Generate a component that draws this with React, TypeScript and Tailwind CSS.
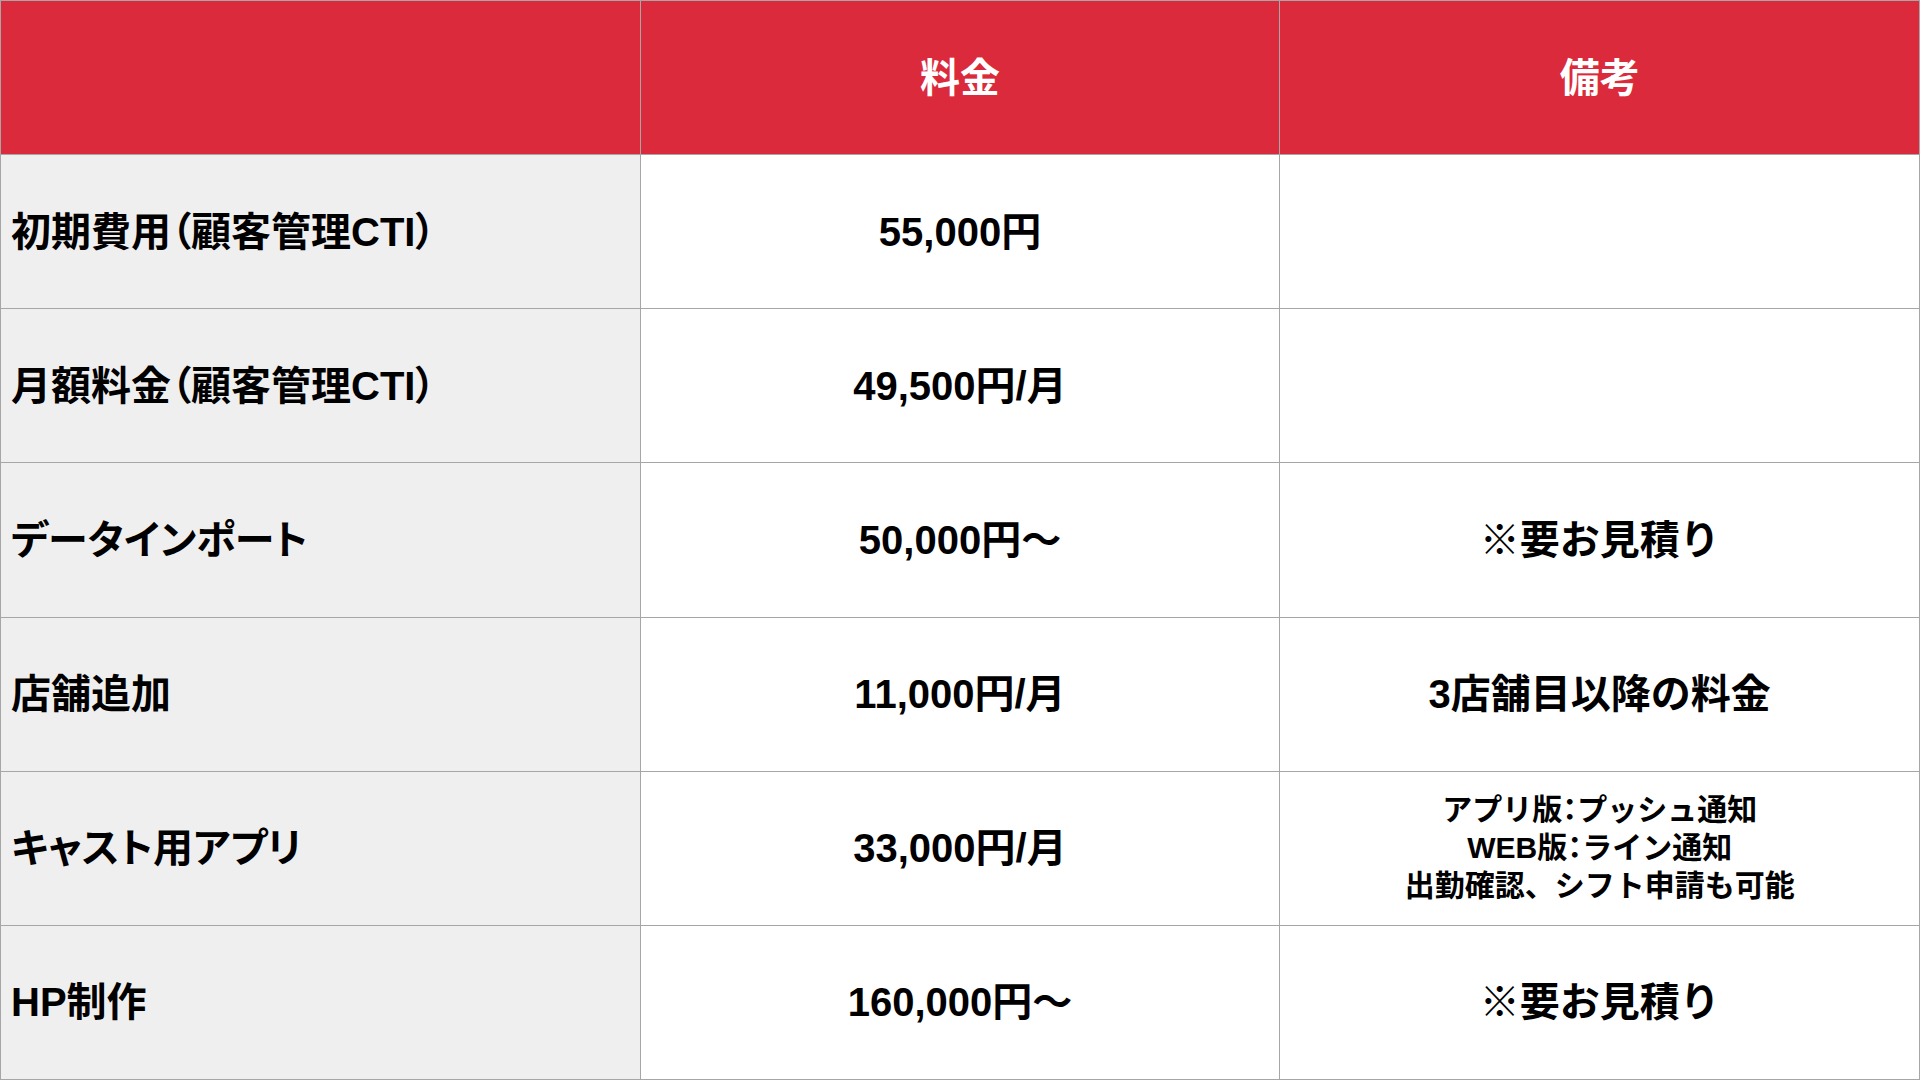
type Row = {
  item: string;
  price: string;
  note?: string[];
};

const rows: Row[] = [
  { item: "初期費用（顧客管理CTI）", price: "55,000円" },
  { item: "月額料金（顧客管理CTI）", price: "49,500円/月" },
  { item: "データインポート", price: "50,000円～", note: ["※要お見積り"] },
  { item: "店舗追加", price: "11,000円/月", note: ["3店舗目以降の料金"] },
  {
    item: "キャスト用アプリ",
    price: "33,000円/月",
    note: ["アプリ版：プッシュ通知", "WEB版：ライン通知", "出勤確認、シフト申請も可能"],
  },
  { item: "HP制作", price: "160,000円～", note: ["※要お見積り"] },
];

export default function App() {
  return (
    <div
      className="grid h-[1080px] w-[1920px] grid-cols-3 grid-rows-7 gap-px overflow-hidden border border-[#a6a6a6] bg-[#a6a6a6] font-bold text-black"
      style={{ fontFamily: '"Liberation Sans", "Noto Sans CJK JP", sans-serif' }}
    >
      <div className="bg-[#da2a3b]" />
      <div className="flex items-center justify-center bg-[#da2a3b] text-[40px] text-white">
        料金
      </div>
      <div className="flex items-center justify-center bg-[#da2a3b] text-[40px] text-white">
        備考
      </div>

      {rows.map((row) => (
        <div key={row.item} className="contents">
          <div className="flex items-center bg-[#efefef] pl-[10px] text-[40px] [font-feature-settings:'palt']">
            {row.item}
          </div>
          <div className="flex items-center justify-center bg-white text-[40px]">
            {row.price}
          </div>
          <div
            className={
              row.note && row.note.length > 1
                ? "flex flex-col items-center justify-center bg-white text-[30px] leading-[38px]"
                : "flex flex-col items-center justify-center bg-white text-[40px]"
            }
          >
            {row.note?.map((line) => (
              <span
                key={line}
                className={line.includes("：") ? "[font-feature-settings:'halt']" : ""}
              >
                {line}
              </span>
            ))}
          </div>
        </div>
      ))}
    </div>
  );
}
